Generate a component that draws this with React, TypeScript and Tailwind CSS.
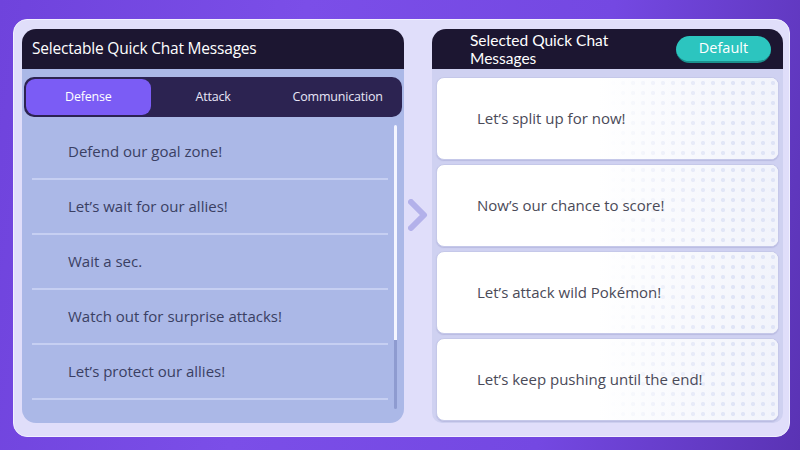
import { useState } from "react";

const defenseMessages = [
  "Defend our goal zone!",
  "Let’s wait for our allies!",
  "Wait a sec.",
  "Watch out for surprise attacks!",
  "Let’s protect our allies!",
];

const selectedMessages = [
  "Let’s split up for now!",
  "Now’s our chance to score!",
  "Let’s attack wild Pokémon!",
  "Let’s keep pushing until the end!",
];

const tabs = ["Defense", "Attack", "Communication"];

const App = () => {
  const [activeTab, setActiveTab] = useState("Defense");

  return (
    <div
      className="w-[800px] h-[450px] overflow-hidden bg-[linear-gradient(100deg,#6f43dc_0%,#7b4ee8_35%,#7448e2_70%,#5a33b4_100%)] pt-[19px] pl-[13px] pr-[10px] pb-[13px]"
      style={{ fontFamily: '"Open Sans", "Noto Sans", sans-serif' }}
    >
      <div className="h-full rounded-[14px] bg-[#e0defa] border border-[#f1f0ff] pt-[9px] pl-[8px] pr-[6px] pb-[13px] flex">
        {/* Left: selectable messages */}
        <div className="w-[382px] flex flex-col">
          <div className="h-[40px] shrink-0 rounded-t-[14px] bg-[#1c1631] flex items-center pl-[10px]">
            <span className="text-white text-[15.5px] tracking-[-0.2px]">Selectable Quick Chat Messages</span>
          </div>
          <div className="flex-1 rounded-b-[14px] bg-[#abb8e7] px-[2px] pt-[8px] flex flex-col">
            <div className="h-[40px] shrink-0 rounded-[10px] bg-[#2c2351] p-[2px] flex">
              {tabs.map((tab) => (
                <button
                  key={tab}
                  onClick={() => setActiveTab(tab)}
                  className={`h-full w-[125px] rounded-[9px] text-[12.5px] tracking-[-0.2px] ${
                    activeTab === tab
                      ? "bg-[#7b5cf5] text-white"
                      : "text-[#e8e6f7]"
                  }`}
                >
                  {tab}
                </button>
              ))}
            </div>
            <div className="flex-1 flex pt-[8px] pl-[8px] pr-[5px]">
              <div className="flex-1">
                {defenseMessages.map((msg) => (
                  <div
                    key={msg}
                    className="h-[55px] border-b-2 border-[#c6cff2] flex items-center pl-[36px] text-[15px] text-[#3a3f63]"
                  >
                    {msg}
                  </div>
                ))}
              </div>
              <div className="w-[3px] ml-[6px] mb-[14px] flex flex-col rounded-full overflow-hidden">
                <div className="h-[215px] bg-[#f4f5ff]" />
                <div className="flex-1 bg-[#8e9bd0]" />
              </div>
            </div>
          </div>
        </div>

        {/* Arrow */}
        <div className="w-[28px] flex items-center justify-center pb-[22px]">
          <svg width="20" height="32" viewBox="0 0 20 32">
            <path
              d="M3 3 L16 16 L3 29"
              fill="none"
              stroke="#b3b1ea"
              strokeWidth="6"
              strokeLinecap="round"
              strokeLinejoin="round"
            />
          </svg>
        </div>

        {/* Right: selected messages */}
        <div className="w-[351px] flex flex-col">
          <div className="h-[40px] shrink-0 rounded-t-[14px] bg-[#1c1631] flex items-center justify-between pl-[38px] pr-[12px]">
            <div className="flex flex-col text-white font-['Lato',sans-serif] text-[15.5px] leading-[18px]">
              <span>Selected Quick Chat</span>
              <span>Messages</span>
            </div>
            <button className="w-[95px] h-[27px] rounded-full bg-[#2cc5bf] border-b-2 border-[#1b918e] text-white text-[14.5px]">
              Default
            </button>
          </div>
          <div className="flex-1 rounded-b-[10px] bg-[#cfd1f1] px-[4px] pt-[8px] flex flex-col gap-[4px]">
            {selectedMessages.map((msg) => (
              <div
                key={msg}
                className="relative h-[83px] shrink-0 rounded-[8px] bg-white border border-[#c5c8e9] shadow-[0_1px_1px_rgba(120,120,180,0.25)] flex items-center pl-[40px] overflow-hidden"
              >
                <div className="absolute right-0 top-0 bottom-0 w-[180px] bg-[linear-gradient(to_right,#ffffff,#f1f3fb)]" />
                <div className="absolute right-0 top-0 bottom-0 w-[170px] bg-[radial-gradient(circle,#dfe4f6_1.8px,transparent_2.4px)] bg-[length:10px_10px] [mask-image:linear-gradient(to_right,transparent,black_75%)]" />
                <span className="relative text-[15px] text-[#4a4a58]">{msg}</span>
              </div>
            ))}
          </div>
        </div>
      </div>
    </div>
  );
};

export default App;
